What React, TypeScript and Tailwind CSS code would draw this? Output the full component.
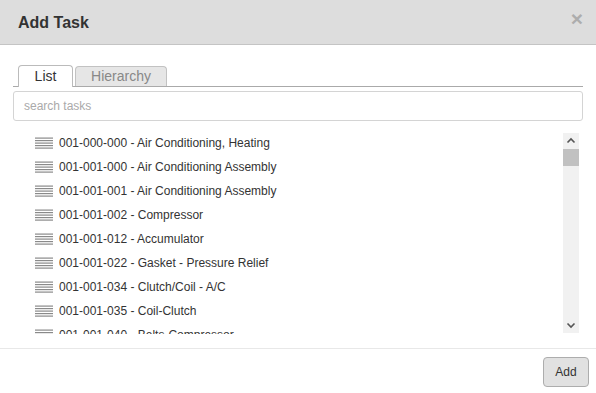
import React from "react";

const items = [
  "001-000-000 - Air Conditioning, Heating",
  "001-001-000 - Air Conditioning Assembly",
  "001-001-001 - Air Conditioning Assembly",
  "001-001-002 - Compressor",
  "001-001-012 - Accumulator",
  "001-001-022 - Gasket - Pressure Relief",
  "001-001-034 - Clutch/Coil - A/C",
  "001-001-035 - Coil-Clutch",
  "001-001-040 - Belts-Compressor",
];

function LinesIcon() {
  return (
    <svg width="18" height="12" viewBox="0 0 18 12" className="shrink-0">
      {[0.5, 3, 5.5, 8, 10.5].map((y) => (
        <rect key={y} x="0" y={y} width="18" height="1.2" fill="#8a8a8a" />
      ))}
    </svg>
  );
}

export default function App() {
  return (
    <div
      className="w-[596px] h-[393px] bg-white flex flex-col overflow-hidden text-[#333]"
      style={{ fontFamily: '"Liberation Sans", Arial, sans-serif' }}
    >
      <div className="h-[45px] bg-[#dddddd] border-b border-[#c4c4c4] flex items-center justify-between pl-[18px] pr-[13px] shrink-0">
        <div className="text-[16px] font-bold text-[#333] mt-[1px]">Add Task</div>
        <div className="text-[21px] font-bold text-[#adadad] leading-none -mt-[7px]">×</div>
      </div>

      <div className="pt-[20px] px-[13px]">
        <div className="flex items-end border-b border-[#aaa] h-[22px] pl-[5px] gap-[2px]">
          <div className="h-[22px] w-[55px] bg-white border border-[#bbb] border-b-0 rounded-t-[4px] flex items-center justify-center text-[14px] text-[#333] -mb-[1px] relative">
            List
          </div>
          <div className="h-[20px] w-[92px] bg-[#e6e6e6] border border-[#c2c2c2] border-b-0 rounded-t-[4px] flex items-center justify-center text-[14px] text-[#888]">
            Hierarchy
          </div>
        </div>
        <div className="mt-[4px] h-[30px] border border-[#d4d4d4] rounded-[3px] flex items-center px-[10px] text-[12px] text-[#aaa]">
          search tasks
        </div>
      </div>

      <div className="relative mt-[10px] h-[203px] overflow-hidden shrink-0">
        <div className="pl-[35px] flex flex-col">
          {items.map((t) => (
            <div key={t} className="h-[24px] flex items-center gap-[6px] text-[12px] text-[#333]">
              <LinesIcon />
              <span>{t}</span>
            </div>
          ))}
        </div>
        <div className="absolute left-[563px] top-[2px] w-[16px] h-[200px] bg-[#f1f1f1] flex flex-col items-center">
          <svg width="16" height="16" viewBox="0 0 16 16">
            <path d="M4.5 9.5 L8 6 L11.5 9.5" stroke="#555" strokeWidth="1.6" fill="none" />
          </svg>
          <div className="w-[16px] h-[17px] bg-[#c1c1c1]" />
          <div className="flex-1" />
          <svg width="16" height="16" viewBox="0 0 16 16">
            <path d="M4.5 6.5 L8 10 L11.5 6.5" stroke="#555" strokeWidth="1.6" fill="none" />
          </svg>
        </div>
      </div>

      <div className="mt-[14px] border-t border-[#e8e8e8] flex justify-end pr-[7px] pt-[8px]">
        <div className="w-[46px] h-[30px] bg-[#e1e1e1] border border-[#adadad] rounded-[4px] flex items-center justify-center text-[12px] text-[#333]">
          Add
        </div>
      </div>
    </div>
  );
}
